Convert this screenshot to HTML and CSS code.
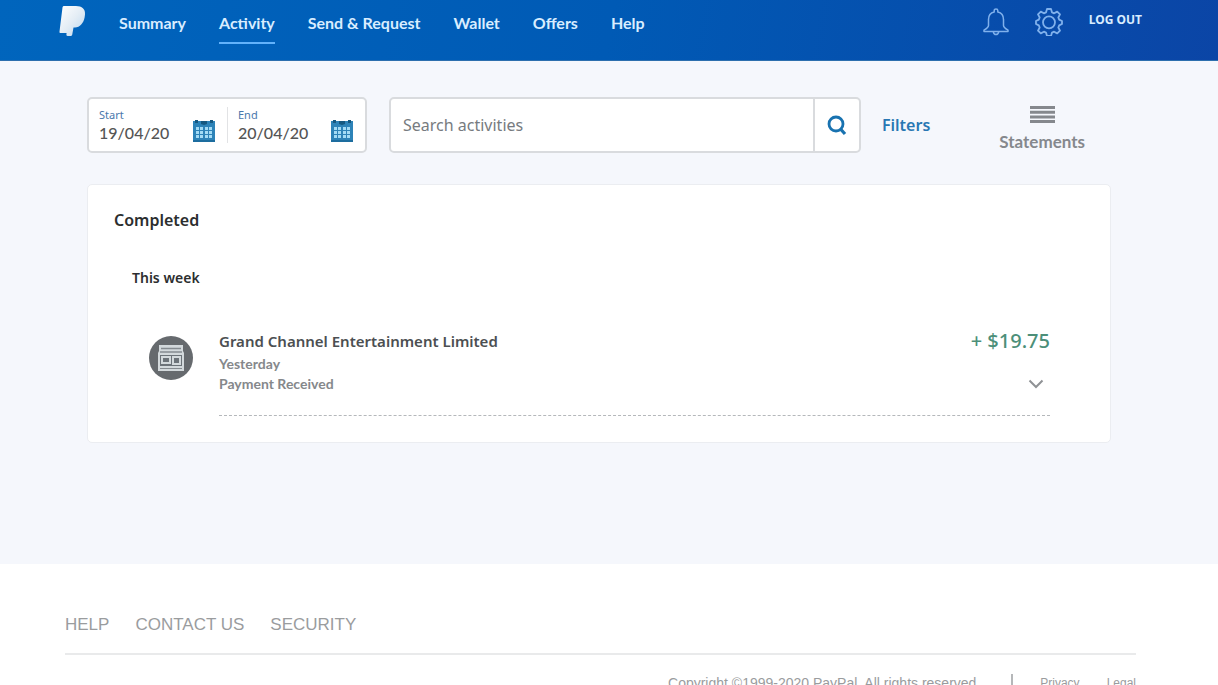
FILE: index.html
```html
<!DOCTYPE html>
<html lang="en">
<head>
<meta charset="utf-8">
<meta name="viewport" content="width=device-width, initial-scale=1">
<title>PayPal: Activity</title>
<link rel="stylesheet" href="styles.css">
</head>
<body>
<header class="topbar">
  <a class="logo" href="#" aria-label="PayPal">
    <svg width="27" height="32" viewBox="0 0 27 32" aria-hidden="true">
      <defs>
        <linearGradient id="logo-shade" x1="0" y1="0" x2="1" y2="1">
          <stop offset="0" stop-color="#ffffff"/>
          <stop offset="0.5" stop-color="#e4edf5"/>
          <stop offset="1" stop-color="#b9d6ef"/>
        </linearGradient>
      </defs>
      <path d="M5 1h12c6 0 9.500 3 9 8.500l-.4 3C24.500 18 21 22.500 16 22.500h-1.500l-1.200 6.700c-.1 1-.8 1.800-1.800 1.800H8.600c-.9 0-1.300-.6-1.200-1.400l.2-1.600H1.800c-1 0-1.500-.6-1.300-1.600L3.500 2.500C3.700 1.500 4.200 1 5 1z" fill="url(#logo-shade)"/>
    </svg>
  </a>
  <nav class="menu" aria-label="Main">
    <a href="#">Summary</a>
    <a class="active" href="#" aria-current="page">Activity</a>
    <a href="#">Send &amp; Request</a>
    <a href="#">Wallet</a>
    <a href="#">Offers</a>
    <a href="#">Help</a>
  </nav>
  <div class="tools">
    <button class="icon-button" type="button" aria-label="Notifications">
      <svg width="26" height="28" viewBox="0 0 26 28" fill="none" stroke="currentColor" stroke-width="1.500" stroke-linejoin="round" aria-hidden="true">
        <path d="M11.200 4V2.600c0-1 .8-1.600 1.800-1.600s1.800.6 1.800 1.600V4c3.800.8 5.700 3.800 5.700 7.500v6c0 1.500 1 2.600 4.500 4.700v1.300H1v-1.300c3.500-2.100 4.500-3.200 4.500-4.700v-6C5.500 7.800 7.400 4.800 11.200 4z"/>
        <path d="M10.300 24c.4 1.700 1.400 2.500 2.700 2.500s2.300-.8 2.700-2.500"/>
      </svg>
    </button>
    <button class="icon-button" type="button" aria-label="Settings">
      <svg width="28" height="28" viewBox="0 0 28 28" fill="none" stroke="currentColor" stroke-width="1.800" stroke-linejoin="round" aria-hidden="true">
        <path d="M11 4.400 12 1h4l1 3.400 2.100.9 3.100-1.700 2.800 2.800-1.700 3.100.9 2.100 2.800 1.400v3l-2.800 1.400-.9 2.100 1.700 3.100-2.800 2.800-3.100-1.700-2.100.9-1 3.400h-4l-1-3.400-2.100-.9-3.100 1.700L3 22.600l1.700-3.100-.9-2.100L1 16v-3l2.800-1.400.9-2.100L3 6.400l2.800-2.800 3.100 1.700z"/>
        <circle cx="14" cy="14.300" r="6"/>
      </svg>
    </button>
    <button class="logout" type="button">LOG OUT</button>
  </div>
</header>

<main class="content">
  <form class="filters">
    <div class="dates">
      <div class="date">
        <div class="date-text">
          <label for="start">Start</label>
          <input id="start" type="text" value="19/04/20">
        </div>
        <svg class="calendar" width="24" height="24" viewBox="0 0 24 24" aria-hidden="true">
          <path d="M1 2h22v21H1z" fill="#2d83b8"/>
          <path d="M9 2h6v3l-3 1-3-1zM3 1h3v3H3zM18 1h3v3h-3z" fill="#155880"/>
          <path d="M4 8h3v3H4zM8 8h3v3H8zM13 8h3v3h-3zM17 8h3v3h-3zM4 12h3v3H4zM8 12h3v3H8zM13 12h3v3h-3zM17 12h3v3h-3zM4 16h3v3H4zM8 16h3v3H8zM13 16h3v3h-3zM17 16h3v3h-3z" fill="#a3dbf5"/>
          <path d="M1 21h22v2H1z" fill="#1d6d9f"/>
        </svg>
      </div>
      <div class="date">
        <div class="date-text">
          <label for="end">End</label>
          <input id="end" type="text" value="20/04/20">
        </div>
        <svg class="calendar" width="24" height="24" viewBox="0 0 24 24" aria-hidden="true">
          <path d="M1 2h22v21H1z" fill="#2d83b8"/>
          <path d="M9 2h6v3l-3 1-3-1zM3 1h3v3H3zM18 1h3v3h-3z" fill="#155880"/>
          <path d="M4 8h3v3H4zM8 8h3v3H8zM13 8h3v3h-3zM17 8h3v3h-3zM4 12h3v3H4zM8 12h3v3H8zM13 12h3v3h-3zM17 12h3v3h-3zM4 16h3v3H4zM8 16h3v3H8zM13 16h3v3h-3zM17 16h3v3h-3z" fill="#a3dbf5"/>
          <path d="M1 21h22v2H1z" fill="#1d6d9f"/>
        </svg>
      </div>
    </div>
    <div class="search">
      <input type="search" placeholder="Search activities" aria-label="Search activities">
      <button type="submit" aria-label="Search">
        <svg width="22" height="22" viewBox="0 0 22 22" fill="none" stroke="currentColor" aria-hidden="true">
          <circle cx="10" cy="10" r="7" stroke-width="2.800"/>
          <path d="M14.500 15l4.500 5" stroke-width="3.200"/>
        </svg>
      </button>
    </div>
    <button class="filter-button" type="button">Filters</button>
    <a class="statements" href="#">
      <svg width="25" height="17" viewBox="0 0 25 17" fill="none" stroke="currentColor" stroke-width="3" aria-hidden="true">
        <path d="M0 1.500h25M0 6.200h25M0 10.900h25M0 15.500h25"/>
      </svg>
      <span>Statements</span>
    </a>
  </form>

  <section class="card">
    <h1>Completed</h1>
    <h2>This week</h2>
    <article class="transaction">
      <svg class="avatar" width="46" height="46" viewBox="0 0 46 46" aria-hidden="true">
        <circle cx="23" cy="23" r="22" fill="#666a6e"/>
        <path d="M11 10h24v6l1 2v18H10V18l1-2z" fill="#d3d9dc"/>
        <path d="M13 13.500h20M12 17h22" stroke="#858b90" stroke-width="1.500"/>
        <path d="M12 20h22v11H12z" fill="#6c7379"/>
        <path d="M14 22h8v6h-8zM25 22h7v7h-7z" fill="none" stroke="#d3d9dc" stroke-width="2"/>
        <path d="M12 33.500h22" stroke="#858b90" stroke-width="1"/>
      </svg>
      <div class="details">
        <div class="summary">
          <h3>Grand Channel Entertainment Limited</h3>
          <p>Yesterday</p>
          <p>Payment Received</p>
        </div>
        <div class="amount">
          <strong>+ $19.75</strong>
          <button type="button" aria-label="Show details">
            <svg width="16" height="10" viewBox="0 0 16 10" fill="none" stroke="currentColor" stroke-width="2" aria-hidden="true">
              <path d="M1.500 1.500 8 8l6.500-6.500"/>
            </svg>
          </button>
        </div>
      </div>
    </article>
  </section>
</main>

<footer class="footer">
  <nav class="footer-links" aria-label="Footer">
    <a href="#">HELP</a>
    <a href="#">CONTACT US</a>
    <a href="#">SECURITY</a>
  </nav>
  <div class="legal">
    <p>Copyright ©1999-2020 PayPal. All rights reserved.</p>
    <span class="divider"></span>
    <a href="#">Privacy</a>
    <a href="#">Legal</a>
  </div>
</footer>
</body>
</html>
```
FILE: styles.css
```css
* {
  box-sizing: border-box;
}

body {
  margin: 0;
  background: #fff;
  color: #2c2e2f;
  font-family: "Noto Sans", sans-serif;
  font-size: 14px;
}

h1, h2, h3, p {
  margin: 0;
}

a {
  color: inherit;
  text-decoration: none;
}

button, input {
  padding: 0;
  border: 0;
  background: none;
  color: inherit;
  font: inherit;
}

svg {
  display: block;
  flex: none;
}

.topbar {
  display: flex;
  align-items: flex-start;
  height: 61px;
  padding: 5px 76px 0 59px;
  background: linear-gradient(100deg, #0065bd 0%, #005ab5 50%, #0b45a6 100%);
  border-bottom: 1px solid #2d6fae;
  color: #d9edff;
}

.menu {
  display: flex;
  gap: 33px;
  margin-left: 33px;
  padding-top: 6px;
  font-family: Lato, sans-serif;
  font-size: 16px;
  font-weight: 700;
  line-height: 24px;
}

.menu a {
  padding-bottom: 7px;
  border-bottom: 2px solid transparent;
}

.menu .active {
  border-color: #62b2fb;
}

.tools {
  display: flex;
  align-items: flex-start;
  gap: 26px;
  margin-left: auto;
  padding-top: 3px;
}

.icon-button {
  color: #80b1ec;
}

.logout {
  font-size: 12px;
  font-weight: 700;
  line-height: 24px;
}

.content {
  min-height: 503px;
  padding: 36px 107px 120px 87px;
  background: #f5f7fc;
}

.filters {
  display: flex;
  align-items: center;
}

.dates,
.search {
  display: flex;
  height: 56px;
  border: 2px solid #d9dbde;
  border-radius: 5px;
  background: #fff;
}

.dates {
  padding: 8px 0;
}

.date {
  display: flex;
  align-items: flex-end;
  width: 138px;
  padding: 0 11px 0 10px;
}

.date + .date {
  border-left: 1px solid #e2e3e5;
}

.date-text {
  flex: 1;
  min-width: 0;
}

.date label {
  display: block;
  color: #4a78ac;
  font-size: 11px;
  line-height: 16px;
}

.date input {
  display: block;
  width: 100%;
  color: #555;
  font-family: Lato, sans-serif;
  font-size: 16px;
  font-weight: 500;
  line-height: 20px;
}

.search {
  flex: 1;
  margin-left: 22px;
}

.search input {
  flex: 1;
  min-width: 0;
  padding: 0 12px;
  font-size: 16px;
}

.search input::placeholder {
  color: #777b80;
}

.search button {
  display: grid;
  place-items: center;
  width: 46px;
  border-left: 2px solid #d9dbde;
  color: #1872b0;
}

.filter-button {
  margin-left: 21px;
  color: #2877b3;
  font-size: 16px;
  font-weight: 600;
}

.statements {
  display: flex;
  flex-direction: column;
  align-items: center;
  gap: 9px;
  margin: 8px 26px 0 69px;
  color: #85888d;
  font-family: Lato, sans-serif;
  font-size: 17px;
  font-weight: 700;
  line-height: 20px;
}

.card {
  margin-top: 31px;
  padding: 24px 60px 26px 26px;
  border: 1px solid #ebedf1;
  border-radius: 5px;
  background: #fff;
}

.card h1 {
  font-size: 16px;
  font-weight: 600;
  line-height: 22px;
}

.card h2 {
  margin: 37px 0 0 18px;
  font-size: 14px;
  font-weight: 600;
  line-height: 20px;
}

.transaction {
  display: flex;
  align-items: flex-start;
  gap: 25px;
  margin: 42px 0 0 34px;
}

.avatar {
  margin-top: 5px;
}

.details {
  display: flex;
  flex: 1;
  justify-content: space-between;
  padding-bottom: 21px;
  border-bottom: 1px dashed #b5b8bb;
}

.summary h3 {
  margin-bottom: 2px;
  color: #4c4f52;
  font-size: 15px;
  font-weight: 600;
  line-height: 22px;
}

.summary p {
  color: #85888b;
  font-family: Lato, sans-serif;
  font-size: 14px;
  font-weight: 700;
  line-height: 20px;
}

.amount {
  display: flex;
  flex-direction: column;
  align-items: flex-end;
  gap: 27px;
  color: #4c8f79;
}

.amount strong {
  font-size: 20px;
  font-weight: 500;
  line-height: 22px;
}

.amount button {
  margin-right: 6px;
  color: #8f9295;
}

.footer {
  padding: 50px 82px 20px 65px;
  color: #9a9c9e;
  font-family: "Liberation Sans", Arial, sans-serif;
}

.footer-links {
  display: flex;
  gap: 26px;
  padding-bottom: 17px;
  border-bottom: 2px solid #e9eaeb;
  font-size: 17px;
  line-height: 22px;
}

.legal {
  display: flex;
  justify-content: flex-end;
  align-items: center;
  gap: 27px;
  padding-top: 19px;
  font-size: 12px;
  line-height: 18px;
}

.legal p {
  font-size: 14px;
}

.divider {
  width: 2px;
  height: 18px;
  margin-left: 4px;
  background: #b5b7b9;
}
```
